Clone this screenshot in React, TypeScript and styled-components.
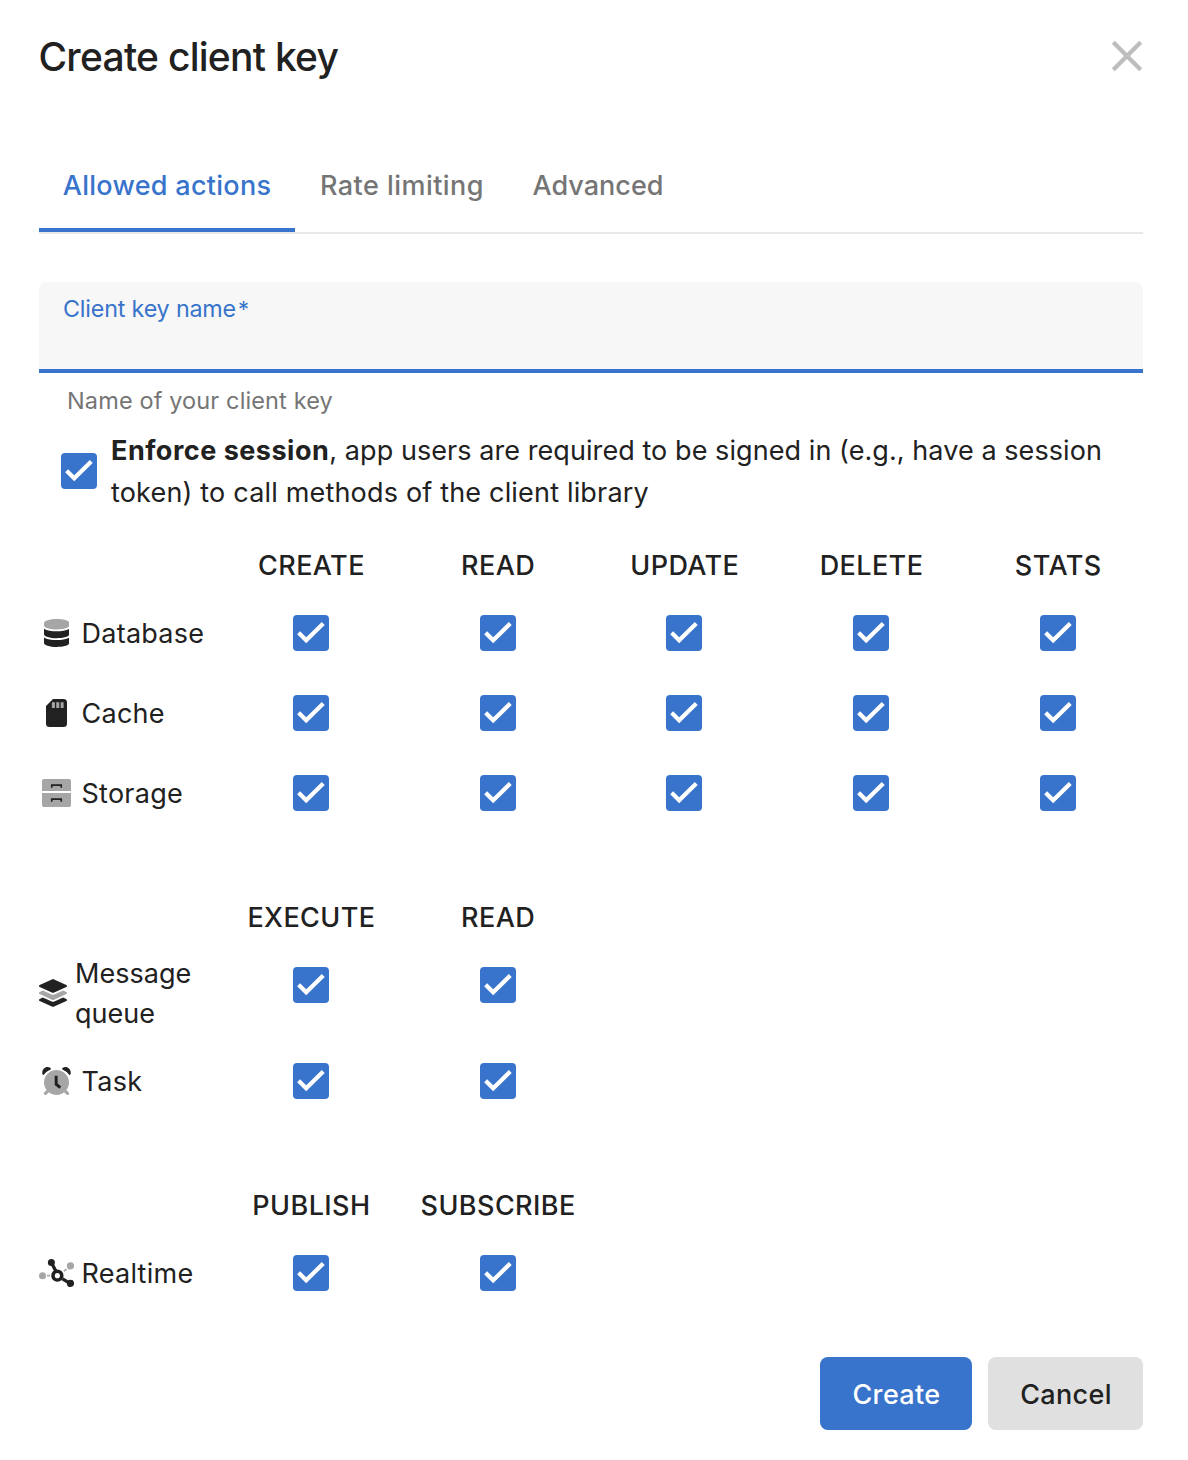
import React, { useState } from "react";
import styled, { createGlobalStyle } from "styled-components";

const BLUE = "#3874cb";
const INK = "#212121";
const GREY = "#a6a6a6";

const GlobalStyle = createGlobalStyle`
  *, *::before, *::after { box-sizing: border-box; }
  body {
    margin: 0;
    background: #fff;
    color: ${INK};
    font-family: Inter, Roboto, "Liberation Sans", sans-serif;
    font-size: 27px;
  }
`;

const Dialog = styled.main`
  display: flex;
  flex-direction: column;
  width: 1188px;
  height: 1460px;
  padding: 32px 45px 30px 39px;
`;

const Header = styled.header`
  display: flex;
  align-items: flex-start;
  justify-content: space-between;
  height: 50px;
`;

const Title = styled.h1`
  margin: 0 0 0 -0.5px;
  font-size: 39px;
  font-weight: 500;
  line-height: 50px;
  letter-spacing: -0.74px;
`;

const CloseButton = styled.button`
  display: flex;
  margin: 8px 0 0;
  padding: 0;
  border: 0;
  background: none;
  cursor: pointer;
`;

const TabList = styled.nav`
  display: flex;
  height: 98px;
  margin-top: 54px;
  border-bottom: 2px solid #e8e8e8;
`;

const Tab = styled.button<{ $active: boolean; $track: number; $width: number }>`
  width: ${(p) => p.$width}px;
  padding: 6px 0 0;
  border: 0;
  border-bottom: 4px solid ${(p) => (p.$active ? BLUE : "transparent")};
  background: none;
  color: ${(p) => (p.$active ? BLUE : "#757575")};
  font: 500 27px Inter, sans-serif;
  letter-spacing: ${(p) => p.$track}px;
  white-space: nowrap;
  cursor: pointer;
`;

const Field = styled.label`
  display: flex;
  flex-direction: column;
  height: 91px;
  margin-top: 48px;
  padding: 11px 24px 0;
  border-radius: 8px 8px 0 0;
  border-bottom: 4px solid ${BLUE};
  background: #f7f7f7;
`;

const FieldLabel = styled.span`
  color: ${BLUE};
  font-size: 23.3px;
  line-height: 32px;
  letter-spacing: -0.18px;
`;

const Required = styled.span`
  margin-left: 2px;
  font-size: 22px;
`;

const Input = styled.input`
  height: 36px;
  padding: 0;
  border: 0;
  outline: 0;
  background: transparent;
  font: inherit;
`;

const Hint = styled.p`
  margin: 12px 0 0 28px;
  color: #757575;
  font-size: 23.5px;
  line-height: 32px;
  letter-spacing: 0.13px;
`;

const SessionRow = styled.div`
  display: flex;
  align-items: center;
  gap: 14px;
  height: 84px;
  margin-top: 13px;
  padding-left: 22px;
  & > button { margin-bottom: 2px; }
`;

const SessionText = styled.p`
  margin: 0;
  line-height: 42px;
  white-space: nowrap;
  & > strong { letter-spacing: 0.5px; }
`;

const Line = styled.span<{ $track: number }>`
  letter-spacing: ${(p) => p.$track}px;
`;

const Group = styled.section<{ $gap: number }>`
  display: grid;
  grid-template-columns: 178.6px repeat(5, 186.7px);
  margin-top: ${(p) => p.$gap}px;
  margin-right: -10px;
`;

const ColumnHead = styled.div<{ $column: number }>`
  grid-column: ${(p) => p.$column};
  height: 56px;
  padding-left: 1px;
  font-weight: 500;
  line-height: 56px;
  letter-spacing: 0.42px;
  text-align: center;
`;

const RowHead = styled.div<{ $tall: boolean }>`
  grid-column: 1;
  display: flex;
  align-items: center;
  gap: ${(p) => (p.$tall ? 8 : 7.5)}px;
  height: ${(p) => (p.$tall ? 96 : 80)}px;
  padding-right: ${(p) => (p.$tall ? 16 : 0)}px;
  line-height: 40px;
  letter-spacing: ${(p) => (p.$tall ? 0.02 : 0.26)}px;
`;

const IconSlot = styled.span<{ $width: number }>`
  display: flex;
  justify-content: center;
  flex: none;
  width: ${(p) => p.$width}px;
  padding-bottom: 2px;
`;

const Cell = styled.div`
  display: flex;
  align-items: center;
  justify-content: center;
  height: 80px;
  padding-bottom: 2px;
`;

const Check = styled.button<{ $on: boolean }>`
  display: flex;
  justify-content: center;
  flex: none;
  width: 36px;
  height: 36px;
  padding: 3px 0 0;
  border: ${(p) => (p.$on ? "0" : "4px solid #757575")};
  border-radius: 4px;
  background: ${(p) => (p.$on ? BLUE : "transparent")};
  cursor: pointer;
`;

const Footer = styled.footer`
  display: flex;
  justify-content: flex-end;
  gap: 16px;
  margin-top: auto;
`;

const Button = styled.button<{ $primary?: boolean }>`
  width: ${(p) => (p.$primary ? 152 : 155)}px;
  height: 73px;
  padding: 1px 0 0 1px;
  border: 0;
  border-radius: 8px;
  background: ${(p) => (p.$primary ? BLUE : "#e0e0e0")};
  color: ${(p) => (p.$primary ? "#fff" : INK)};
  font: 500 27px Inter, sans-serif;
  letter-spacing: 0.35px;
  cursor: pointer;
`;

const DatabaseIcon = () => (
  <svg width="25.5" height="28" viewBox="0 0 448 512" preserveAspectRatio="none">
    <path fill={GREY} d="M448 73v46c0 40-100 73-224 73S0 159 0 119V73C0 33 100 0 224 0s224 33 224 73z" />
    <path fill={INK} d="M0 176v103c0 40 100 73 224 73s224-33 224-73V176c-48 33-136 48-224 48S48 209 0 176z" />
    <path fill={INK} d="M0 336v103c0 40 100 73 224 73s224-33 224-73V336c-48 33-136 48-224 48S48 369 0 336z" />
  </svg>
);

const CacheIcon = () => (
  <svg width="21" height="28" viewBox="0 0 384 512">
    <path fill={INK} d="M320 0H128L0 128v320a64 64 0 0 0 64 64h256a64 64 0 0 0 64-64V64a64 64 0 0 0-64-64z" />
    <path fill={GREY} d="M108 60h54v104h-54zM188 60h54v104h-54zM268 60h54v104h-54z" />
  </svg>
);

const StorageIcon = () => (
  <svg width="29" height="28" viewBox="0 0 530 512">
    <path fill={GREY} d="M32 0h466q32 0 32 32v188H0V32Q0 0 32 0zM0 256h530v224q0 32-32 32H32q-32 0-32-32z" />
    <path fill="none" stroke={INK} strokeWidth="30" d="M178 160v-48h174v48M178 416v-48h174v48" />
  </svg>
);

const QueueIcon = () => (
  <svg width="28" height="28" viewBox="0 0 512 512">
    <path fill={INK} d="M12.4 148l233 105.700c6.800 3 14.500 3 21.200 0l233-105.700c16.500-7.500 16.500-32.500 0-40L266.700 2.300a25.600 25.600 0 0 0-21.300 0L12.400 108c-16.500 7.500-16.500 32.500 0 40z" />
    <path fill={GREY} d="M499.600 236.300l-58.100-26.300-161.600 73.300a58 58 0 0 1-47.800 0L70.500 210l-58.100 26.300c-16.500 7.500-16.500 32.500 0 40l233 105.600c6.800 3 14.500 3 21.200 0l233-105.600c16.500-7.500 16.500-32.500 0-40z" />
    <path fill={INK} d="M499.600 364.100l-57.900-26.200-161.800 73.300a58 58 0 0 1-47.800 0L70.300 337.900l-57.900 26.200c-16.500 7.500-16.500 32.500 0 40l233 105.600c6.800 3 14.500 3 21.200 0l233-105.600c16.500-7.500 16.500-32.500 0-40z" />
  </svg>
);

const TaskIcon = () => (
  <svg width="29" height="28" viewBox="0 0 530 512">
    <circle cx="265" cy="284" r="228" fill={GREY} />
    <path stroke={GREY} strokeWidth="56" strokeLinecap="round" d="M117 432l-54 52M413 432l54 52" />
    <path fill={INK} d="M12 136C-20 60 60-30 148 12q26 14 8 32A280 280 0 0 0 42 134q-18 22-30 2zM518 136C550 60 470-30 382 12q-26 14-8 32a280 280 0 0 1 114 90q18 22 30 2z" />
    <path fill="none" stroke={INK} strokeWidth="54" d="M259 158v158l76 60" />
  </svg>
);

const RealtimeIcon = () => (
  <svg width="35" height="28" viewBox="0 0 640 512">
    <g fill={GREY}>
      <circle cx="64" cy="304" r="64" />
      <circle cx="576" cy="126" r="66" />
    </g>
    <path stroke={GREY} strokeWidth="32" d="M146 304h54M454 222l50-36" />
    <path stroke={INK} strokeWidth="60" d="M226 64l78 150M430 362l130 78" />
    <circle cx="336" cy="304" r="80" fill="none" stroke={INK} strokeWidth="66" />
    <g fill={INK}>
      <circle cx="226" cy="64" r="64" />
      <circle cx="576" cy="446" r="66" />
    </g>
  </svg>
);

function Checkbox({ label }: { label: string }) {
  const [on, setOn] = useState(true);
  return (
    <Check type="button" role="checkbox" aria-checked={on} aria-label={label} $on={on} onClick={() => setOn(!on)}>
      {on && (
        <svg width="28" height="28" viewBox="0 0 24 24" overflow="visible">
          <path fill="none" stroke="#fff" strokeWidth="3.6" d="M1.4 12.7L7.9 19.1 22.5 4.7" />
        </svg>
      )}
    </Check>
  );
}

type Row = { name: string; icon: () => React.JSX.Element; tall?: boolean };

const groups: { gap: number; actions: string[]; rows: Row[] }[] = [
  {
    gap: 24,
    actions: ["CREATE", "READ", "UPDATE", "DELETE", "STATS"],
    rows: [
      { name: "Database", icon: DatabaseIcon },
      { name: "Cache", icon: CacheIcon },
      { name: "Storage", icon: StorageIcon },
    ],
  },
  {
    gap: 56,
    actions: ["EXECUTE", "READ"],
    rows: [
      { name: "Message queue", icon: QueueIcon, tall: true },
      { name: "Task", icon: TaskIcon },
    ],
  },
  { gap: 56, actions: ["PUBLISH", "SUBSCRIBE"], rows: [{ name: "Realtime", icon: RealtimeIcon }] },
];

const tabs = [
  { name: "Allowed actions", track: 0.28, width: 256 },
  { name: "Rate limiting", track: 0.46, width: 214 },
  { name: "Advanced", track: 0.02, width: 178 },
];

export default function App() {
  const [active, setActive] = useState(0);
  return (
    <>
      <GlobalStyle />
      <Dialog>
        <Header>
          <Title>Create client key</Title>
          <CloseButton aria-label="Close">
            <svg width="32" height="32" viewBox="0 0 32 32">
              <path stroke="#bdbdbd" strokeWidth="4.3" d="M2.300 2.300l27.400 27.400M29.700 2.300L2.300 29.700" />
            </svg>
          </CloseButton>
        </Header>
        <TabList>
          {tabs.map((t, i) => (
            <Tab key={t.name} $active={i === active} $track={t.track} $width={t.width} onClick={() => setActive(i)}>
              {t.name}
            </Tab>
          ))}
        </TabList>
        <Field>
          <FieldLabel>
            Client key name<Required>*</Required>
          </FieldLabel>
          <Input />
        </Field>
        <Hint>Name of your client key</Hint>
        <SessionRow>
          <Checkbox label="Enforce session" />
          <SessionText>
            <strong>Enforce session</strong>
            <Line $track={0.07}>, app users are required to be signed in (e.g., have a session</Line>
            <br />
            <Line $track={0.18}>token) to call methods of the client library</Line>
          </SessionText>
        </SessionRow>
        {groups.map((g) => (
          <Group key={g.actions[0]} $gap={g.gap}>
            {g.actions.map((a, i) => (
              <ColumnHead key={a} $column={i + 2}>{a}</ColumnHead>
            ))}
            {g.rows.map(({ name, icon: Icon, tall }) => (
              <React.Fragment key={name}>
                <RowHead $tall={!!tall}>
                  <IconSlot $width={tall ? 28 : 35}>
                    <Icon />
                  </IconSlot>
                  {name}
                </RowHead>
                {g.actions.map((a) => (
                  <Cell key={a}>
                    <Checkbox label={`${name} ${a}`} />
                  </Cell>
                ))}
              </React.Fragment>
            ))}
          </Group>
        ))}
        <Footer>
          <Button $primary>Create</Button>
          <Button>Cancel</Button>
        </Footer>
      </Dialog>
    </>
  );
}
